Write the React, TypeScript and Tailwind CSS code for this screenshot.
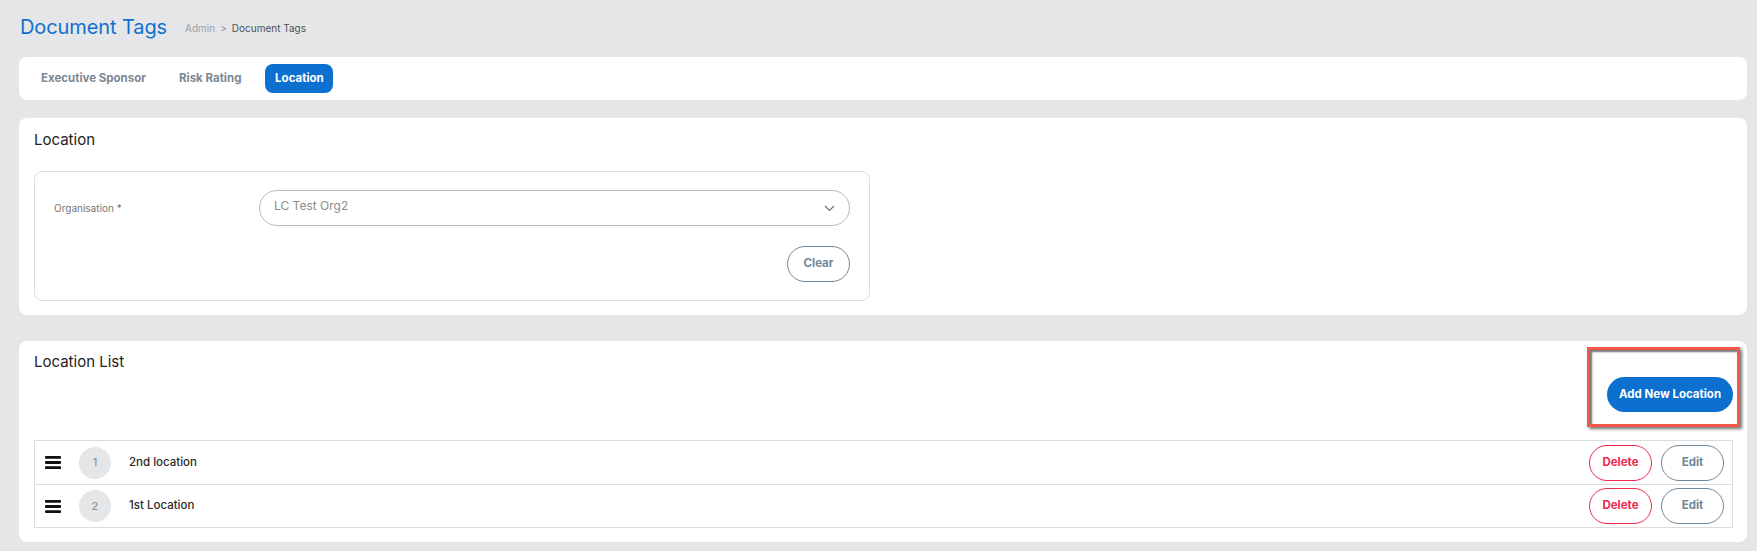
const rows = [
  { n: 1, name: "2nd location" },
  { n: 2, name: "1st Location" },
];

function Chevron() {
  return (
    <svg width="11" height="7" viewBox="0 0 11 7" fill="none" className="text-[#6b6b6b]">
      <path d="M1 1l4.5 4.5L10 1" stroke="currentColor" strokeWidth="1.1" />
    </svg>
  );
}

function DragHandle() {
  return (
    <svg width="16" height="13" viewBox="0 0 16 13" className="text-[#111]">
      <rect x="0" y="0" width="16" height="2.8" rx="0.8" fill="currentColor" />
      <rect x="0" y="5.1" width="16" height="2.8" rx="0.8" fill="currentColor" />
      <rect x="0" y="10.2" width="16" height="2.8" rx="0.8" fill="currentColor" />
    </svg>
  );
}

export default function App() {
  return (
    <div
      className="min-h-screen bg-[#e5e6e8] pl-[19px] pr-[10px] pb-[9px]"
      style={{ fontFamily: "Inter, 'Open Sans', sans-serif" }}
    >
      {/* header */}
      <div className="flex items-center h-[57px] pl-px pb-[3px]">
        <h1 className="text-[20px] text-[#1170cf] font-normal tracking-[-0.1px]">Document Tags</h1>
        <div className="ml-[18px] mt-[2px] text-[10px] flex items-center gap-[5px]">
          <span className="text-[#9aa1a8]">Admin</span>
          <span className="text-[#8a8f95]">&gt;</span>
          <span className="text-[#4d5257]">Document Tags</span>
        </div>
      </div>

      {/* tabs */}
      <div className="bg-white rounded-[8px] h-[43px] flex items-center px-[10px] gap-[9px]">
        <button className="h-[29px] px-[12px] rounded-[8px] text-[11.5px] font-bold text-[#7b8794]">Executive Sponsor</button>
        <button className="h-[29px] px-[12px] rounded-[8px] text-[11.5px] font-bold text-[#7b8794]">Risk Rating</button>
        <button className="ml-[3px] h-[29px] w-[68px] rounded-[8px] text-[11.5px] font-bold text-white bg-[#0b70d0]">Location</button>
      </div>

      {/* filter card */}
      <div className="bg-white rounded-[8px] mt-[18px] px-[15px] pt-[12px] pb-[14px]">
        <h2 className="text-[15px] text-[#222] leading-[20px]">Location</h2>
        <div className="mt-[21px] w-[836px] border border-[#dcdcdc] rounded-[8px] pl-[19px] pr-[19px] pt-[18px] pb-[18px]">
          <div className="flex items-center">
            <label className="w-[205px] text-[10px] text-[#777]">Organisation *</label>
            <div className="flex-1 h-[36px] border border-[#b9b9b9] rounded-full flex items-center justify-between pl-[14px] pr-[14px]">
              <span className="text-[12px] text-[#8c8c8c] -mt-[4px]">LC Test Org2</span>
              <Chevron />
            </div>
          </div>
          <div className="flex justify-end mt-[20px]">
            <button className="w-[63px] h-[36px] rounded-full border border-[#70879a] text-[11.5px] font-bold text-[#70879a]">Clear</button>
          </div>
        </div>
      </div>

      {/* list card */}
      <div className="bg-white rounded-[8px] mt-[26px] pl-[15px] pr-[14px] pt-[11px] pb-[14px]">
        <h2 className="text-[15px] text-[#222] leading-[20px]">Location List</h2>
        <div className="flex justify-end mt-[5px]">
          <div className="relative">
            <button className="w-[126px] h-[35px] rounded-full bg-[#0b70d0] text-white text-[11.5px] font-bold">Add New Location</button>
            <div className="absolute -left-[20px] -right-[7px] -top-[30px] -bottom-[15px] border-[3px] border-[#f4584a] shadow-[2px_2px_3px_rgba(0,0,0,0.55),inset_2px_2px_2px_rgba(0,0,0,0.55)] pointer-events-none" />
          </div>
        </div>
        <div className="mt-[28px] border border-[#dcdcdc]">
          {rows.map((r, i) => (
            <div
              key={r.n}
              className={`h-[43px] flex items-center pl-[10px] pr-[8px] ${i > 0 ? "border-t border-[#dcdcdc]" : ""}`}
            >
              <DragHandle />
              <div className="ml-[18px] w-[32px] h-[32px] rounded-full bg-[#e5e6e8] flex items-center justify-center text-[11px] text-[#8a96a3] font-medium">
                {r.n}
              </div>
              <span className="ml-[18px] text-[11.5px] font-medium text-[#2b2b2b]">{r.name}</span>
              <div className="ml-auto flex items-center gap-[9px]">
                <button className="w-[63px] h-[36px] rounded-full border border-[#f0284f] text-[#f0284f] text-[11.5px] font-bold">Delete</button>
                <button className="w-[63px] h-[36px] rounded-full border border-[#70879a] text-[#70879a] text-[11.5px] font-bold">Edit</button>
              </div>
            </div>
          ))}
        </div>
      </div>
    </div>
  );
}
